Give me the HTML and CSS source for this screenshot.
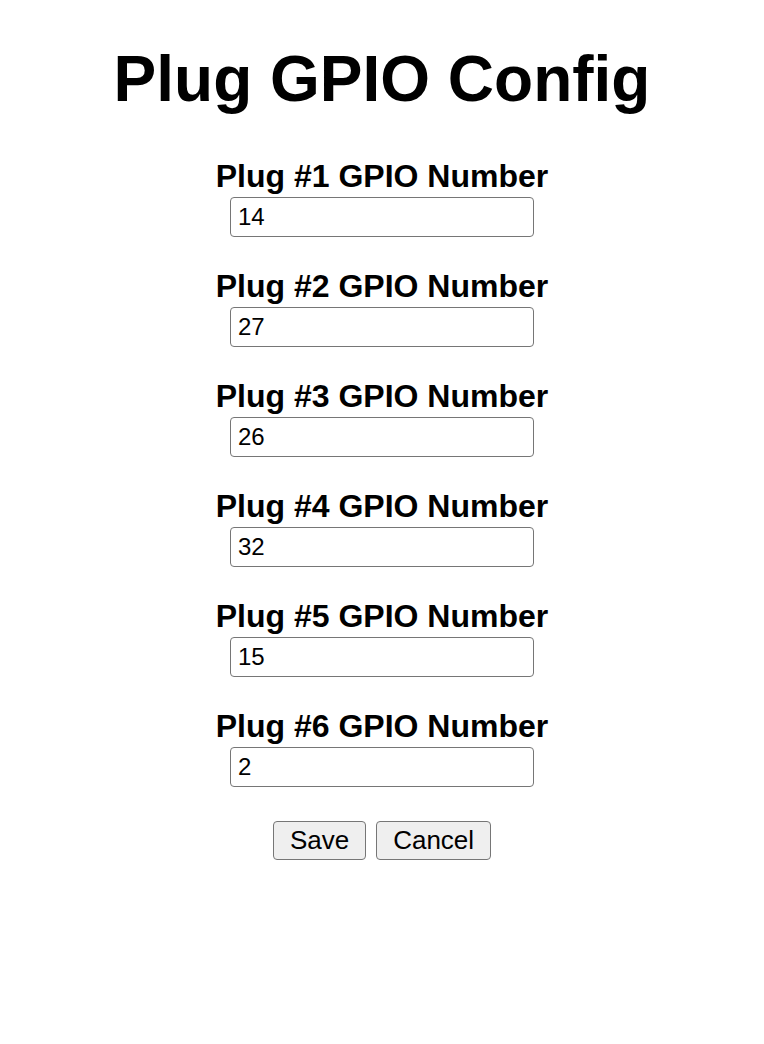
FILE: index.html
```html
<!DOCTYPE html>
<html>
<head>
<meta charset="utf-8">
<title>Plug GPIO Config</title>
<link rel="stylesheet" href="styles.css">
</head>
<body>
<main class="page">
  <h1 class="title">Plug GPIO Config</h1>
  <form class="form">
    <div class="field">
      <label class="label" for="p1">Plug #1 GPIO Number</label>
      <input class="input" id="p1" type="text" value="14">
    </div>
    <div class="field">
      <label class="label" for="p2">Plug #2 GPIO Number</label>
      <input class="input" id="p2" type="text" value="27">
    </div>
    <div class="field">
      <label class="label" for="p3">Plug #3 GPIO Number</label>
      <input class="input" id="p3" type="text" value="26">
    </div>
    <div class="field">
      <label class="label" for="p4">Plug #4 GPIO Number</label>
      <input class="input" id="p4" type="text" value="32">
    </div>
    <div class="field">
      <label class="label" for="p5">Plug #5 GPIO Number</label>
      <input class="input" id="p5" type="text" value="15">
    </div>
    <div class="field">
      <label class="label" for="p6">Plug #6 GPIO Number</label>
      <input class="input" id="p6" type="text" value="2">
    </div>
    <div class="actions">
      <button class="btn" type="button">Save</button>
      <button class="btn" type="button">Cancel</button>
    </div>
  </form>
</main>
</body>
</html>
```
FILE: styles.css
```css
html, body {
  margin: 0;
  padding: 0;
  background: #ffffff;
}
body {
  font-family: "Liberation Sans", Arial, Helvetica, sans-serif;
  color: #000000;
}
.page {
  display: flex;
  flex-direction: column;
  align-items: center;
  padding-top: 42px;
}
.title {
  margin: 0;
  font-size: 64px;
  font-weight: bold;
  line-height: 74px;
}
.form {
  margin-top: 40px;
  display: flex;
  flex-direction: column;
  align-items: center;
  gap: 29px;
}
.field {
  display: flex;
  flex-direction: column;
  align-items: center;
  gap: 1px;
}
.label {
  font-size: 32px;
  font-weight: bold;
  line-height: 40px;
}
.input {
  box-sizing: border-box;
  width: 304px;
  height: 40px;
  margin: 0;
  padding: 0 7px;
  border: 1px solid #767676;
  border-radius: 4px;
  font-family: "Liberation Sans", Arial, Helvetica, sans-serif;
  font-size: 24px;
  color: #000000;
  background: #ffffff;
}
.actions {
  display: flex;
  gap: 10px;
  margin-top: 5px;
}
.btn {
  box-sizing: border-box;
  height: 39px;
  margin: 0;
  padding: 0 16px;
  border: 1px solid #767676;
  border-radius: 4px;
  background: #efefef;
  font-family: "Liberation Sans", Arial, Helvetica, sans-serif;
  font-size: 26px;
  color: #000000;
}
```
